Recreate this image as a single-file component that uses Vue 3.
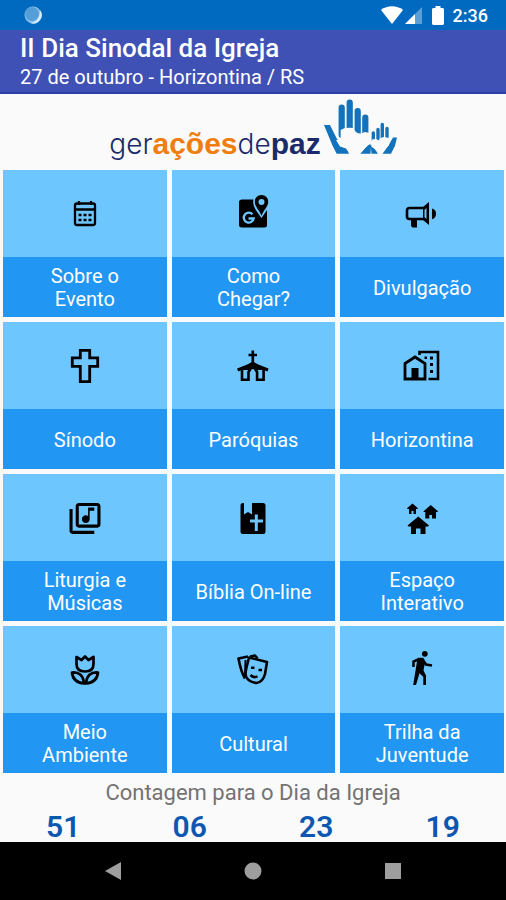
<template>
  <div class="app">
    <div class="status-bar">
      <svg class="sync" viewBox="0 0 18 18">
        <circle cx="9" cy="9" r="8.5" fill="#8fc3ea" />
        <circle cx="8" cy="8" r="7" fill="#559fd9" />
        <path d="M16 4a8.5 8.5 0 0 1-10 13c5 0 10-4 10-13z" fill="#d4ecfb" />
      </svg>
      <div class="status-right">
        <svg class="wifi" viewBox="0 0 22 18"><path d="M0 4C6-1 16-1 22 4L11 18z" fill="#fff" /></svg>
        <svg class="signal" viewBox="0 0 17 17">
          <path d="M17 0v17H0z" fill="#5b9fd8" />
          <path d="M10 7v10H0z" fill="#fff" />
        </svg>
        <svg class="battery" viewBox="0 0 12 19"><path d="M3.500 0h5v2H11l1 1v15l-1 1H1l-1-1V3l1-1h2.500z" fill="#fff" /></svg>
        <span class="clock">2:36</span>
      </div>
    </div>

    <header class="header">
      <h1>II Dia Sinodal da Igreja</h1>
      <p>27 de outubro - Horizontina / RS</p>
    </header>

    <main>
      <div class="logo">
        <div class="logo-text"><span class="thin">ger</span><b class="orange">ações</b><span class="thin">de</span><b>paz</b></div>
        <svg class="hands" viewBox="0 0 74 58">
          <g fill="none" stroke="#1272bb" stroke-linecap="round">
            <path d="M18.700 8.500V36M26.700 3.500V34M34.700 12v22M42.300 18.500V34" stroke-width="6.200" />
            <path d="M50.300 34v8M55 30.500V42M59.300 25.500V42M64 29.500V42" stroke-width="3.400" />
          </g>
          <g fill="#1272bb">
            <path d="M1 26h6l7 14 10 10 2 4.700H13.700L9.700 47z" />
            <path d="M37 54.700l9-10 2 2-.5 8zM47.500 45l8 9.700h-7z" />
            <path d="M74 38.500h-4l-4.500 8-6 8.200h8.500l4-8z" />
          </g>
          <g fill="#fafafa">
            <path d="M13 41h4.500l.2-10q4-3 12.300-2 3 6 8 5.500l4-1.500 4.500 1 2 2-1.500 4 .5 4.500L43 48l-6 7H27l-4-5.500-6-2z" />
            <path d="M48.500 41q4-2 7 .5 1-3 5.500-3.500l5.500 1-.5 7-5 5.500-3 3.500h-3l-2.500-5-4-2z" />
          </g>
        </svg>
      </div>

      <div class="grid">
        <button v-for="item in items" :key="item.label" class="tile" type="button">
          <span class="tile-icon">
            <svg viewBox="0 0 40 40" v-html="item.icon"></svg>
          </span>
          <span class="tile-label">{{ item.label }}</span>
        </button>
      </div>

      <section class="countdown">
        <h2>Contagem para o Dia da Igreja</h2>
        <div class="numbers">
          <span v-for="n in countdown" :key="n">{{ n }}</span>
        </div>
      </section>
    </main>

    <nav class="nav-bar">
      <button type="button" aria-label="Voltar"><svg viewBox="0 0 18 18"><path d="M1 9L17 0v18z" /></svg></button>
      <button type="button" aria-label="Início"><svg viewBox="0 0 18 18"><circle cx="9" cy="9" r="8.500" /></svg></button>
      <button type="button" aria-label="Recentes"><svg viewBox="0 0 18 18"><path d="M1 1h16v16H1z" /></svg></button>
    </nav>
  </div>
</template>

<script setup>
const stroke = 'fill="none" stroke="#000"'

const items = [
  {
    label: 'Sobre o\nEvento',
    icon: `<rect x="10" y="9.500" width="20" height="21.500" rx="2" ${stroke} stroke-width="2.300"/>
      <path d="M10 15.500h20M14 7v4M26 7v4" ${stroke} stroke-width="2.300"/>
      <path d="M13.500 21h3M18.500 21h3M23.500 21h3M13.500 26h3M18.500 26h3M23.500 26h3" ${stroke} stroke-width="2.500"/>`
  },
  {
    label: 'Como\nChegar?',
    icon: `<path d="M9 5.500h11.500c-1.500 6 2.500 11 8 18.500l5.500-8V31q0 2.500-2.500 2.500H9q-3 0-3-2.500V8q0-2.500 3-2.500z"/>
      <path fill-rule="evenodd" d="M28.500 1c-4 0-6.700 3-6.700 6.700 0 5 4.500 8 6.700 14 2.200-6 6.700-9 6.700-14C35.200 4 32.500 1 28.500 1zm0 4a3 3 0 1 1 0 6 3 3 0 0 1 0-6z"/>
      <path d="M19.500 20.300a5 5 0 1 0 1.200 4.200H15.500" fill="none" stroke="#6ec6ff" stroke-width="2.300"/>`
  },
  {
    label: 'Divulgação',
    icon: `<path d="M23.500 14H7.500Q5 14 5 16.500v6Q5 25 7.500 25h16" ${stroke} stroke-width="2.600"/>
      <path fill-rule="evenodd" d="M27 8v23l-6-5V13zm-2.500 6l-2 1.500v8l2 1.500z"/>
      <path d="M9 25h6v8.500h-4.500L9 32zM30 14.500q4 1 4 5.300t-4 5.400z"/>`
  },
  {
    label: 'Sínodo',
    icon: `<path d="M15.300 4.300h9.400v7.500h8v8.500h-8v15.400h-9.400V20.300h-8v-8.500h8z" ${stroke} stroke-width="2.800"/>`
  },
  {
    label: 'Paróquias',
    icon: `<path d="M19.800 4.500V18M15.500 9h8.500" ${stroke} stroke-width="2.600"/>
      <path d="M19.800 15.500l5.500 3 10.200 4-1 3-4-1.500h-8l-2.700-1-2.700 1h-8l-4 1.500-1-3 10.200-4z"/>
      <path d="M9 22v11.700h6.500V26l2-3M30.600 22v11.700h-6.500V26l-2-3" ${stroke} stroke-width="2.600"/>`
  },
  {
    label: 'Horizontina',
    icon: `<path d="M3 17.500l10-6.500 10 6.500V33H3z" ${stroke} stroke-width="2.800"/>
      <path d="M9.500 22h7v11h-7z"/>
      <path d="M17.500 9V6H36v27h-9.500" ${stroke} stroke-width="2.600"/>
      <path d="M22.500 10.500h2.500v2.500h-2.500zM28 10.500h3v3h-3zM28 17h3v3h-3zM28 24h3v3h-3z"/>`
  },
  {
    label: 'Liturgia e\nMúsicas',
    icon: `<path transform="translate(1.400 1.800) scale(1.550)" d="M20 2H8c-1.100 0-2 .9-2 2v12c0 1.100.9 2 2 2h12c1.100 0 2-.9 2-2V4c0-1.100-.9-2-2-2zm0 14H8V4h12v12zm-7.500-1c1.380 0 2.500-1.120 2.500-2.500V7h3V5h-4v5.510c-.42-.32-.93-.51-1.500-.51-1.380 0-2.500 1.120-2.500 2.500s1.120 2.500 2.500 2.500zM4 6H2v14c0 1.100.9 2 2 2h14v-2H4V6z"/>`
  },
  {
    label: 'Bíblia On-line',
    icon: `<path d="M10 5h1v11.500l4-2.500 4 2.500V5h11q2.500 0 2.500 2.500v26Q32.500 36 30 36H10q-2.500 0-2.500-2.500v-26Q7.500 5 10 5z"/>
      <path d="M23.300 16.500V33M17 23h13" fill="none" stroke="#6ec6ff" stroke-width="3"/>`
  },
  {
    label: 'Espaço\nInterativo',
    icon: `<path d="M16.300 18.500l10.700 9-1 1h-2.500V36h-5v-5.500h-4.500V36H9v-7.500H6.500l-1-1z"/>
      <path d="M10.500 5.500l5.500 4.800-.5.700H14v5h-2.500v-3h-2v3H7v-5H5.500L5 10.300z"/>
      <path d="M28.700 7l7.300 6.300-.5.700H34v6.500h-4V17h-2.700v3.500h-4V14h-1.500l-.3-.7z"/>`
  },
  {
    label: 'Meio\nAmbiente',
    icon: `<path d="M11.500 7l5 3L20 6.500l3.500 3.500 5-3v7q0 7.500-8.500 7.500T11.500 14z" ${stroke} stroke-width="2.700" stroke-linejoin="round"/>
      <path d="M7 22.500q11-1 12 11-11-1-12-11zM33 22.500q-11-1-12 11 11-1 12-11z" ${stroke} stroke-width="2.700" stroke-linejoin="round"/>`
  },
  {
    label: 'Cultural',
    icon: `<path d="M12 28.500Q8 22 5.500 8.500L15 6.500M17 6.500l5-1 2.500 3" ${stroke} stroke-width="2.600" stroke-linejoin="round"/>
      <path d="M12.500 10l-.5 18" ${stroke} stroke-width="2"/>
      <path d="M16 7.500l18 4.500-2 12q-2 8-8.500 9-8-1-10.500-6.500-1-3 .5-9z" ${stroke} stroke-width="2.600" stroke-linejoin="round"/>
      <path d="M18 17.800h3.500M25.500 20h3.500M17.500 25q3.500 3.500 7 1.200" ${stroke} stroke-width="2.500"/>`
  },
  {
    label: 'Trilha da\nJuventude',
    icon: `<circle cx="22.800" cy="3.800" r="2.900"/>
      <path d="M11.500 17v-5.500l5.500-2.500h3.500l3.500 5.500 6 1" ${stroke} stroke-width="2.500"/>
      <path d="M15.500 8.500l6 .5 1.500 3.500-1.500 8 2.500 5V35h-2.700v-8l-3.800-3.800L14 35h-2.800z"/>`
  }
]

const countdown = ['51', '06', '23', '19']
</script>

<style>
body {
  margin: 0;
  background: #fafafa;
}
</style>

<style scoped>
.app {
  display: flex;
  flex-direction: column;
  min-height: 100vh;
  font-family: Roboto, "Liberation Sans", sans-serif;
}

button {
  padding: 0;
  border: 0;
  background: none;
  font: inherit;
  cursor: pointer;
}

svg {
  display: block;
}

.status-bar {
  display: flex;
  align-items: center;
  justify-content: space-between;
  height: 30px;
  padding: 0 18px 0 24px;
  background: #0069c0;
}

.sync {
  width: 18px;
  height: 18px;
}

.status-right {
  display: flex;
  align-items: center;
}

.wifi {
  width: 22px;
  height: 18px;
}

.signal {
  width: 17px;
  height: 17px;
  margin: 0 10px 0 2px;
}

.battery {
  width: 12px;
  height: 19px;
  margin-right: 9px;
}

.clock {
  color: #fff;
  font-size: 18px;
  font-weight: 500;
}

.header {
  box-sizing: border-box;
  height: 64px;
  padding: 3px 20px 0;
  background: #3f51b5;
  border-bottom: 2px solid #2a3ea8;
  color: #fff;
}

.header h1 {
  margin: 0;
  font-size: 26px;
  font-weight: 500;
  line-height: 30px;
}

.header p {
  margin: 0;
  font-size: 20px;
  line-height: 28px;
}

.logo {
  display: flex;
  justify-content: center;
  height: 76px;
}

.logo-text {
  padding-top: 32px;
  color: #1b2a6b;
  font-family: "Liberation Sans", Arial, sans-serif;
  font-size: 30px;
  line-height: 36px;
}

.thin {
  font-family: Inter, sans-serif;
  font-size: 28px;
  font-weight: 300;
}

.orange {
  color: #f07d10;
}

.hands {
  width: 74px;
  height: 58px;
  margin: 5px 0 0 2px;
}

.grid {
  display: grid;
  grid-template-columns: repeat(3, 1fr);
  gap: 5px;
  padding: 0 2px 0 3px;
}

.tile {
  display: flex;
  flex-direction: column;
  color: #fff;
}

.tile-icon {
  display: flex;
  align-items: center;
  justify-content: center;
  width: 100%;
  height: 87px;
  background: #6ec6ff;
}

.tile-icon svg {
  width: 40px;
  height: 40px;
}

.tile-label {
  display: flex;
  align-items: center;
  justify-content: center;
  width: 100%;
  height: 60px;
  padding-top: 2px;
  box-sizing: border-box;
  background: #2196f3;
  font-size: 20px;
  line-height: 23px;
  white-space: pre-line;
}

.countdown {
  text-align: center;
}

.countdown h2 {
  margin: 0;
  padding-top: 6px;
  color: #737373;
  font-size: 22px;
  font-weight: 400;
  line-height: 28px;
}

.numbers {
  display: grid;
  grid-template-columns: repeat(4, 1fr);
  padding-top: 5px;
  color: #0d57b0;
  font-size: 30px;
  font-weight: 600;
  line-height: 30px;
}

.nav-bar {
  display: flex;
  align-items: center;
  justify-content: center;
  gap: 122px;
  height: 58px;
  margin-top: auto;
  background: #000;
}

.nav-bar svg {
  width: 18px;
  height: 18px;
  fill: #9e9e9e;
}
</style>
